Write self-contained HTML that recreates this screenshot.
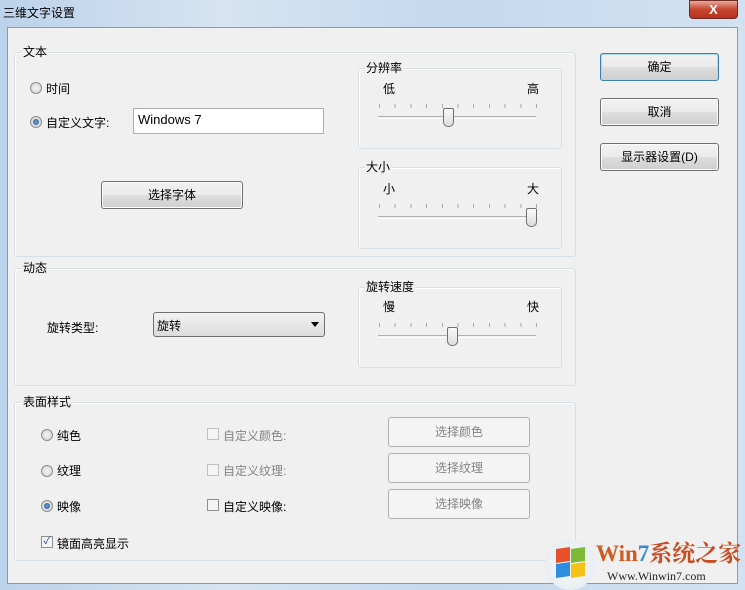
<!DOCTYPE html>
<html><head><meta charset="utf-8"><style>
*{box-sizing:border-box;margin:0;padding:0}
body{width:745px;height:590px;overflow:hidden;position:relative;font-family:"Liberation Sans","Noto Sans CJK SC",sans-serif;font-size:12px;color:#000;background:linear-gradient(90deg,#bcd2ea,#d6e4f2 30%,#c4d8ee 60%,#d2e2f2);}
.a{position:absolute}
.title{left:3px;top:4px;font-size:12px}
.close{left:689px;top:0;width:49px;height:19px;border-radius:0 0 4px 4px;background:linear-gradient(#e9a99a,#c7452f 50%,#b8321d);border:1px solid #6b2a22;color:#fff;font-weight:bold;text-align:center;line-height:17px;font-size:13px}
.inner{left:7px;top:27px;width:731px;height:557px;background:#f0f0f0;border:1px solid #8a9ab0}
.grp{position:absolute;border:1px solid #d5dfe5;border-radius:3px;box-shadow:inset 1px 1px 0 #fff}
.lbl{position:absolute;background:#f0f0f0;padding:0 1px;line-height:14px}
.btn{position:absolute;border:1px solid #707070;border-radius:3px;background:linear-gradient(#f2f2f2 0%,#ebebeb 48%,#dddddd 52%,#cfcfcf 100%);text-align:center;box-shadow:inset 0 0 0 1px #fcfcfc}
.def{border-color:#3c7fb1;box-shadow:inset 0 0 0 1px #a9dcf4}
.dis{position:absolute;border:1px solid #adb2b5;border-radius:3px;background:#f4f4f4;color:#838383;text-align:center}
.radio{position:absolute;width:12px;height:12px;border-radius:50%;border:1px solid #8d8d8d;background:radial-gradient(#f4f4f4,#d0d0d0)}
.radio.on::after{content:"";position:absolute;left:2px;top:2px;width:6px;height:6px;border-radius:50%;background:radial-gradient(#6ea6d6,#1b4f8a)}
.cb{position:absolute;width:12px;height:12px;border:1px solid #8e8f8f;background:#f4f4f4}
.gray{color:#838383}
.track{position:absolute;height:3px;border-top:1px solid #b0b0b0;border-bottom:1px solid #fff;width:158px}
.thumb{position:absolute;width:11px;height:19px;border:1px solid #707070;border-radius:2px 2px 5px 5px;background:linear-gradient(#fafafa,#dcdcdc)}
.ticks{position:absolute;height:4px;width:158px;background:repeating-linear-gradient(90deg,#a8a8a8 0 1px,transparent 1px 15.7px)}
</style></head><body>
<div class="a title">三维文字设置</div>
<div class="a close">X</div>
<div class="a inner"></div>

<div class="grp" style="left:14px;top:52px;width:562px;height:205px"></div>
<div class="lbl" style="left:22px;top:45px">文本</div>
<div class="radio" style="left:30px;top:82px"></div><div class="a" style="left:46px;top:80px">时间</div>
<div class="radio on" style="left:30px;top:116px"></div><div class="a" style="left:46px;top:114px">自定义文字:</div>
<div class="a" style="left:133px;top:108px;width:191px;height:26px;background:#fff;border:1px solid #abadb3;padding:3px 4px;font-size:13px">Windows 7</div>
<div class="btn" style="left:101px;top:181px;width:142px;height:28px;line-height:26px">选择字体</div>

<div class="grp" style="left:358px;top:68px;width:204px;height:81px"></div>
<div class="lbl" style="left:365px;top:61px">分辨率</div>
<div class="a" style="left:383px;top:80px">低</div><div class="a" style="left:527px;top:80px">高</div>
<div class="ticks" style="left:379px;top:104px"></div>
<div class="track" style="left:378px;top:116px"></div>
<div class="thumb" style="left:443px;top:108px"></div>

<div class="grp" style="left:358px;top:167px;width:204px;height:82px"></div>
<div class="lbl" style="left:365px;top:160px">大小</div>
<div class="a" style="left:383px;top:180px">小</div><div class="a" style="left:527px;top:180px">大</div>
<div class="ticks" style="left:379px;top:204px"></div>
<div class="track" style="left:378px;top:216px"></div>
<div class="thumb" style="left:526px;top:208px"></div>

<div class="grp" style="left:14px;top:268px;width:562px;height:118px"></div>
<div class="lbl" style="left:22px;top:261px">动态</div>
<div class="a" style="left:47px;top:319px">旋转类型:</div>
<div class="a" style="left:153px;top:312px;width:172px;height:25px;border:1px solid #707070;border-radius:3px;background:linear-gradient(#f2f2f2,#dcdcdc);padding:4px 3px">旋转<span style="position:absolute;right:5px;top:9px;border:4px solid transparent;border-top:5px solid #000;border-bottom:0"></span></div>
<div class="grp" style="left:358px;top:287px;width:204px;height:81px"></div>
<div class="lbl" style="left:365px;top:280px">旋转速度</div>
<div class="a" style="left:383px;top:298px">慢</div><div class="a" style="left:527px;top:298px">快</div>
<div class="ticks" style="left:379px;top:323px"></div>
<div class="track" style="left:378px;top:335px"></div>
<div class="thumb" style="left:447px;top:327px"></div>

<div class="grp" style="left:14px;top:402px;width:562px;height:159px"></div>
<div class="lbl" style="left:22px;top:395px">表面样式</div>
<div class="radio" style="left:41px;top:429px"></div><div class="a" style="left:57px;top:427px">纯色</div>
<div class="radio" style="left:41px;top:465px"></div><div class="a" style="left:57px;top:462px">纹理</div>
<div class="radio on" style="left:41px;top:500px"></div><div class="a" style="left:57px;top:498px">映像</div>
<div class="cb" style="left:207px;top:428px;border-color:#c0c0c0"></div><div class="a gray" style="left:223px;top:427px">自定义颜色:</div>
<div class="cb" style="left:207px;top:464px;border-color:#c0c0c0"></div><div class="a gray" style="left:223px;top:462px">自定义纹理:</div>
<div class="cb" style="left:207px;top:499px"></div><div class="a" style="left:223px;top:498px">自定义映像:</div>
<div class="dis" style="left:388px;top:417px;width:142px;height:30px;line-height:28px">选择颜色</div>
<div class="dis" style="left:388px;top:453px;width:142px;height:30px;line-height:28px">选择纹理</div>
<div class="dis" style="left:388px;top:489px;width:142px;height:30px;line-height:28px">选择映像</div>
<div class="cb" style="left:41px;top:536px;font-size:10px;line-height:10px;text-align:center;color:#1b3f7a">✓</div><div class="a" style="left:57px;top:535px">镜面高亮显示</div>

<div class="btn def" style="left:600px;top:53px;width:119px;height:28px;line-height:26px">确定</div>
<div class="btn" style="left:600px;top:98px;width:119px;height:28px;line-height:26px">取消</div>
<div class="btn" style="left:600px;top:143px;width:119px;height:28px;line-height:26px">显示器设置(D)</div>

<div class="a" style="left:545px;top:540px;width:50px;height:50px;border-radius:50%;background:radial-gradient(#fff,#dde6ee)"></div>
<div class="a" style="left:556px;top:548px;width:14px;height:14px;background:#e8502a;transform:skewY(-8deg)"></div>
<div class="a" style="left:571px;top:548px;width:14px;height:14px;background:#7cb936;transform:skewY(-8deg)"></div>
<div class="a" style="left:556px;top:563px;width:14px;height:14px;background:#2d8ee0;transform:skewY(-8deg)"></div>
<div class="a" style="left:571px;top:563px;width:14px;height:14px;background:#f6c21a;transform:skewY(-8deg)"></div>
<div class="a" style="left:596px;top:541px;font-family:'Liberation Serif','Noto Serif CJK SC',serif;font-weight:bold;font-size:23px;color:#d05a20;line-height:26px">Win<span style="color:#3a8ad6">7</span><span style="color:#c94b20">系统之家</span></div>
<div class="a" style="left:607px;top:569px;font-family:'Liberation Serif',serif;font-size:12px;color:#222">Www.Winwin7.com</div>
</body></html>
